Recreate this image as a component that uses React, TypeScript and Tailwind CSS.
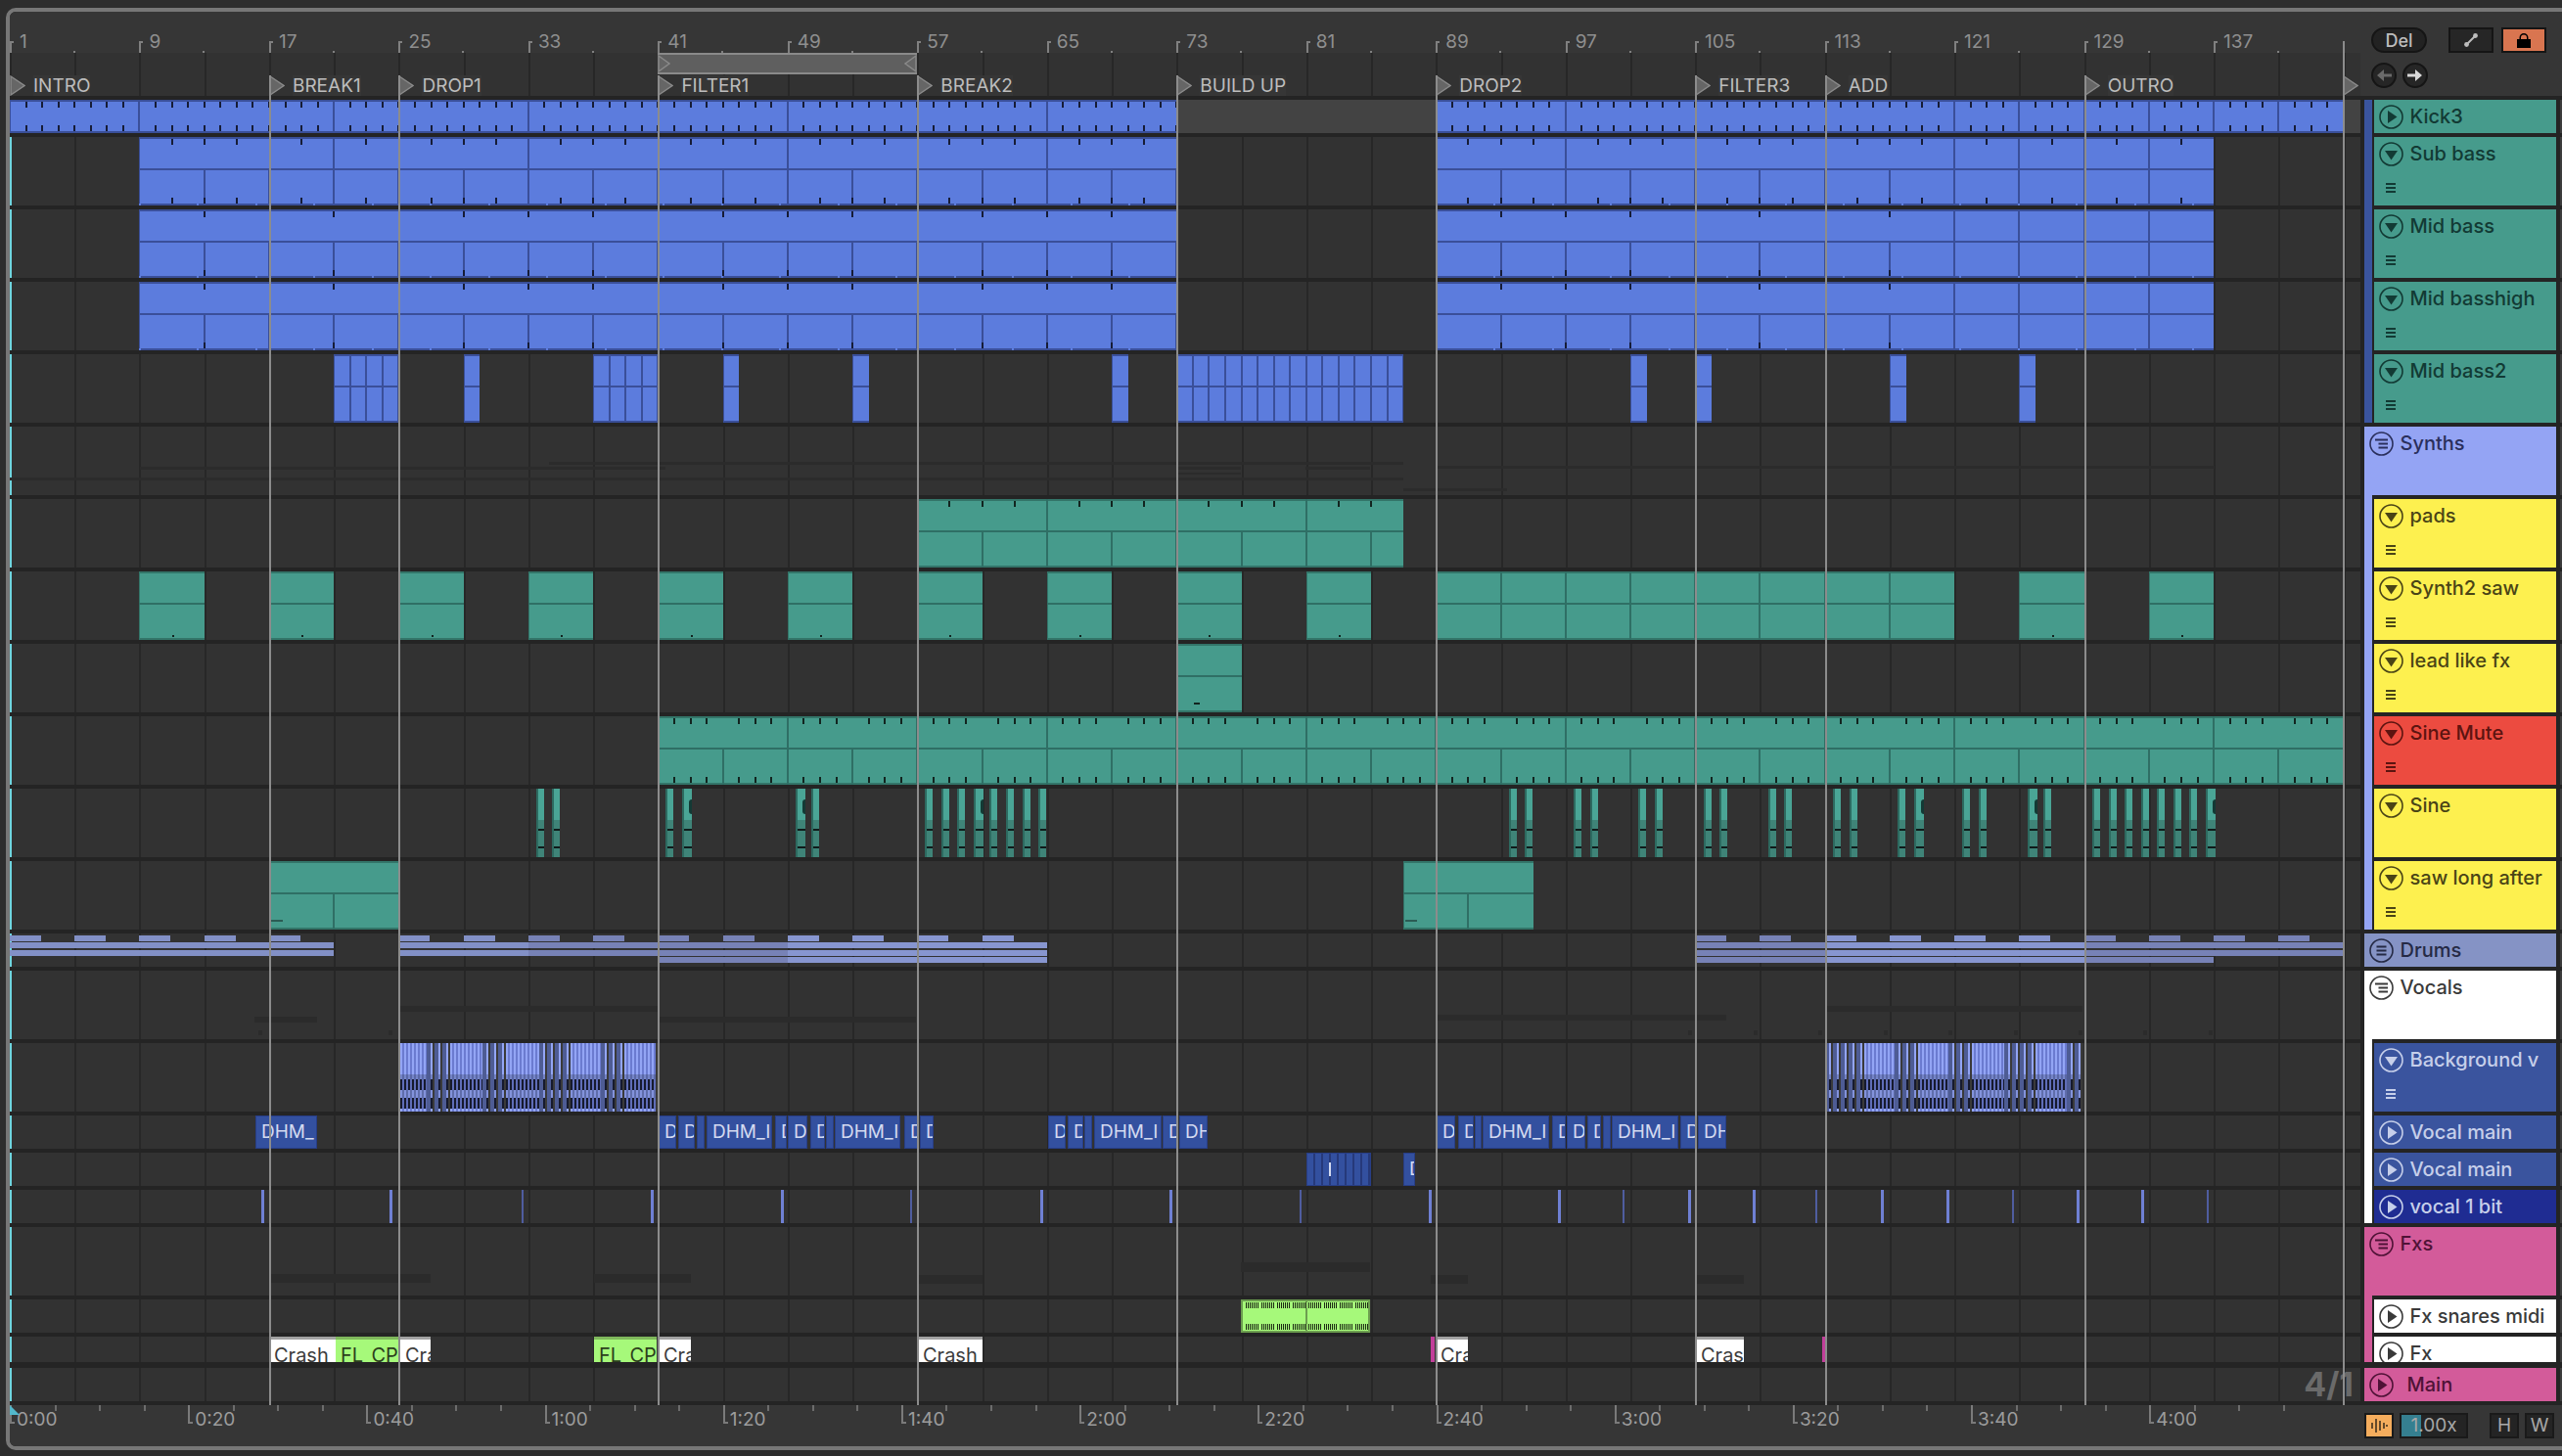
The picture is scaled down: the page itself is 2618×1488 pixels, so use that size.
import type { ReactNode } from 'react'

const BAR = 16.56
const bx = (b: number) => (b - 1) * BAR

const range = (a: number, b: number, step = 1) => {
  const out: number[] = []
  for (let i = a; i < b; i += step) out.push(i)
  return out
}

type Pal = { bg: string; band: string; split: string; tick: string }
const BLUE: Pal = { bg: 'bg-[#5c7cdd]', band: 'bg-[#3a4f99]', split: 'bg-[#3a4f99]', tick: 'bg-[#161c36]' }
const TEAL: Pal = { bg: 'bg-[#469b8c]', band: 'bg-[#337569]', split: 'bg-[#2f6f65]', tick: 'bg-[#12241f]' }

type ClipProps = {
  from: number
  to: number
  pal: Pal
  mid?: boolean
  splits?: number[]
  topSplits?: number[]
  botSplits?: number[]
  topTicks?: number[]
  botTicks?: number[]
  children?: ReactNode
}

function Clip({ from, to, pal, mid, splits = [], topSplits = [], botSplits = [], topTicks = [], botTicks = [], children }: ClipProps) {
  const inside = (b: number) => b >= from && b <= to
  return (
    <div className={`absolute inset-y-0 overflow-hidden ${pal.bg}`} style={{ left: bx(from), width: bx(to) - bx(from) }}>
      <div className={`absolute inset-x-0 top-0 h-[2px] ${pal.band}`} />
      <div className={`absolute inset-x-0 bottom-0 h-[2px] ${pal.band}`} />
      <div className={`absolute inset-y-0 left-0 w-[1px] ${pal.band}`} />
      {mid && <div className={`absolute inset-x-0 top-[32px] h-[2px] ${pal.split}`} />}
      {splits.filter(inside).map((b) => (
        <div key={b} className={`absolute inset-y-0 w-[2px] ${pal.split}`} style={{ left: bx(b) - bx(from) - 1 }} />
      ))}
      {topSplits.filter(inside).map((b) => (
        <div key={b} className={`absolute top-0 h-[32px] w-[2px] ${pal.split}`} style={{ left: bx(b) - bx(from) - 1 }} />
      ))}
      {botSplits.filter(inside).map((b) => (
        <div key={b} className={`absolute top-[34px] bottom-0 w-[2px] ${pal.split}`} style={{ left: bx(b) - bx(from) - 1 }} />
      ))}
      {topTicks.filter(inside).map((b) => (
        <div key={b} className={`absolute top-[2px] h-[6px] w-[2px] ${pal.tick}`} style={{ left: bx(b) - bx(from) - 1 }} />
      ))}
      {botTicks.filter(inside).map((b) => (
        <div key={b} className={`absolute bottom-[2px] h-[6px] w-[2px] ${pal.tick}`} style={{ left: bx(b) - bx(from) - 1 }} />
      ))}
      {children}
    </div>
  )
}

// thin marks given in page pixels, lane starts at x=10
function Px({ x, w, y, h, cls }: { x: number; w: number; y: number; h: number; cls: string }) {
  return <div className={`absolute ${cls}`} style={{ left: x - 10, width: w, top: y, height: h }} />
}

function Named({ x1, x2, label }: { x1: number; x2: number; label: string }) {
  return (
    <div
      className="absolute inset-y-0 overflow-hidden whitespace-nowrap border border-[#283e86] bg-[#33509f] pl-[5px] text-[19px] leading-[32px] text-[#d3daf0]"
      style={{ left: x1 - 10, width: x2 - x1 }}
    >
      {label}
    </div>
  )
}

function FxClip({ x1, x2, label, green }: { x1: number; x2: number; label: string; green?: boolean }) {
  return (
    <div
      className={`absolute inset-y-0 overflow-hidden whitespace-nowrap border-t-[3px] pl-[5px] text-[20px] leading-[32px] ${
        green ? 'border-[#7fb85c] bg-[#a6f97a] text-[#2c3f1c]' : 'border-[#a2a2a2] bg-white text-[#3c3c3c]'
      }`}
      style={{ left: x1 - 10, width: x2 - x1 }}
    >
      {label}
    </div>
  )
}

const KICK_SPLITS = [9, 21, 33, 49, 65, 97, 121, 125, 129, 133, 137, 141]
const LOCATORS = [17, 25, 41, 57, 73, 89, 105, 113, 129]
const END_BAR = 144.96

const kickTicks = range(2, 146).filter((b) => !KICK_SPLITS.includes(b) && !(b >= 121 && b % 4 === 1))
const subSkip = [9, 17, 21, 25, 33, 41, 49, 57, 65, 73, 89, 97, 105, 113, 121, 125, 129, 133]
const subTicks = range(9, 136, 2).filter((b) => !subSkip.includes(b))
const subBot = range(13, 137, 4)
const midTicks = range(13, 118, 4).filter((b) => ![17, 25, 41, 57, 73, 77, 81, 85, 89, 105, 113].includes(b))

function Bass({ ticks, tops }: { ticks: number[]; tops: number[] }) {
  const common = { pal: BLUE, mid: true, topSplits: tops, botSplits: subBot, topTicks: ticks, botTicks: ticks }
  const notches = (
    <div className="absolute inset-x-0 bottom-0 h-[2px] bg-[repeating-linear-gradient(90deg,#5c7cdd_0,#5c7cdd_2px,transparent_2px,transparent_59.5px)]" />
  )
  return (
    <>
      <Clip from={9} to={73} {...common}>{notches}</Clip>
      <Clip from={89} to={137} {...common}>{notches}</Clip>
    </>
  )
}

function Kick() {
  return (
    <>
      <Clip from={1} to={73} pal={BLUE} splits={KICK_SPLITS} topTicks={kickTicks} botTicks={kickTicks} />
      <div className="absolute inset-y-0 bg-[#434343]" style={{ left: bx(73), width: bx(89) - bx(73) }} />
      <Clip from={89} to={END_BAR} pal={BLUE} splits={KICK_SPLITS} topTicks={kickTicks} botTicks={kickTicks} />
      <div className="absolute inset-y-0 right-0 w-[17px] bg-[#434343]" />
    </>
  )
}

function Bass2() {
  const smalls = [29, 45, 53, 69, 101, 105, 117, 125]
  const blockSplits = range(22, 88)
  return (
    <>
      <Clip from={21} to={25} pal={BLUE} mid splits={blockSplits} />
      <Clip from={37} to={41} pal={BLUE} mid splits={blockSplits} />
      <Clip from={73} to={87} pal={BLUE} mid splits={blockSplits} />
      {smalls.map((b) => (
        <Clip key={b} from={b} to={b + 1} pal={BLUE} mid />
      ))}
    </>
  )
}

function Faint({ items }: { items: [number, number, number, number][] }) {
  return (
    <>
      {items.map(([x1, x2, y, h], i) => (
        <Px key={i} x={x1} w={x2 - x1} y={y} h={h} cls="bg-[#2b2b2b]" />
      ))}
    </>
  )
}

function Saw2() {
  const starts = [9, 17, 25, 33, 41, 49, 57, 65, 73, 81, 125, 133]
  return (
    <>
      {starts.map((b) => (
        <Clip key={b} from={b} to={b + 4} pal={TEAL} mid>
          <div className="absolute bottom-[3px] left-1/2 h-[2px] w-[2px] bg-[#12241f]" />
        </Clip>
      ))}
      <Clip from={89} to={121} pal={TEAL} mid splits={range(93, 121, 4)} />
    </>
  )
}

function SineBit({ bar, wide }: { bar: number; wide?: boolean }) {
  return (
    <div
      className={`absolute inset-y-0 flex flex-col overflow-hidden border-l-2 border-[#2d6a60] bg-[#4aa596] ${wide ? 'w-[10px]' : 'w-[8px]'}`}
      style={{ left: bx(bar) }}
    >
      {wide && <div className="absolute right-[-3px] top-[11px] h-[15px] w-[6px] rounded-full bg-[#133a35]" />}
      <div className="h-[32px]" />
      <div className="relative flex-1 bg-[#3f8478]">
        <div className="absolute inset-x-0 top-[9px] h-[2px] bg-[#0f1b1a]" />
        <div className="absolute inset-x-0 top-[27px] h-[2px] bg-[#0f1b1a]" />
      </div>
    </div>
  )
}

function Sine() {
  const bars = [
    33.47, 34.47, 41.47, 42.47, 49.47, 50.47,
    ...range(57.47, 65),
    93.5, 94.5, 97.5, 98.5, 101.5, 102.5, 105.5, 106.5, 109.5, 110.5, 113.5, 114.5, 117.5, 118.5, 121.5, 122.5, 125.5, 126.5,
    ...range(129.5, 137),
  ]
  const wide = [42.47, 49.47, 60.47, 118.5, 125.5, 136.5]
  return (
    <>
      {bars.map((b) => (
        <SineBit key={b} bar={b} wide={wide.includes(b)} />
      ))}
    </>
  )
}

const DRUM_SPANS: [number, number, string][] = [
  [1, 21, 'bg-[#8290c6]'],
  [25, 33, 'bg-[#8290c6]'],
  [33, 49, 'bg-[#7782b6]'],
  [49, 65, 'bg-[#8796d0]'],
  [105, 113, 'bg-[#7782b6]'],
  [113, 129, 'bg-[#8796d0]'],
  [129, END_BAR, 'bg-[#7782b6]'],
]

function Drums() {
  const dashes = [...range(1, 21, 4), ...range(25, 65, 4), ...range(105, 145, 4)]
  const third = DRUM_SPANS.filter(([a]) => a >= 33).map(([a, b, cls]): [number, number, string] => [Math.max(a, 41), Math.min(b, 137), cls])
  return (
    <>
      {dashes.map((b) => (
        <div
          key={b}
          className={`absolute top-[2px] h-[6px] w-[32px] ${DRUM_SPANS.find(([a, z]) => b >= a && b < z)?.[2]}`}
          style={{ left: bx(b) }}
        />
      ))}
      {DRUM_SPANS.map(([a, b, cls]) => (
        <div key={a} className={`absolute top-[9px] h-[6px] ${cls}`} style={{ left: bx(a), width: bx(b) - bx(a) }} />
      ))}
      {DRUM_SPANS.map(([a, b, cls]) => (
        <div key={a} className={`absolute top-[17px] h-[6px] ${cls}`} style={{ left: bx(a), width: bx(b) - bx(a) }} />
      ))}
      {third.map(([a, b, cls]) => (
        <div key={a} className={`absolute top-[24px] h-[6px] ${cls}`} style={{ left: bx(a), width: bx(b) - bx(a) }} />
      ))}
    </>
  )
}

function StripeBands() {
  return (
    <div className="flex h-full flex-col">
      <div className="h-[32px] bg-[repeating-linear-gradient(90deg,#93a5f5_0,#93a5f5_2px,#6b7bd0_2px,#6b7bd0_4px)]" />
      <div className="h-[5px] bg-[repeating-linear-gradient(90deg,#7484c8_0,#7484c8_2px,#5a68a6_2px,#5a68a6_4px)]" />
      <div className="h-[11px] bg-[repeating-linear-gradient(90deg,#161a2e_0,#161a2e_2px,#5f6db8_2px,#5f6db8_4px)]" />
      <div className="h-[8px] bg-[repeating-linear-gradient(90deg,#8393dc_0,#8393dc_2px,#5f6daa_2px,#5f6daa_4px)]" />
      <div className="h-[11px] bg-[repeating-linear-gradient(90deg,#161a2e_0,#161a2e_2px,#5f6db8_2px,#5f6db8_4px)]" />
      <div className="h-[3px] bg-[repeating-linear-gradient(90deg,#93a5f5_0,#93a5f5_2px,#6b7bd0_2px,#6b7bd0_4px)]" />
    </div>
  )
}

// 0 is a short slice (blue column, one stripe, gap), any other number a long run of that width
function Stutter({ x, units }: { x: number; units: number[] }) {
  return (
    <div className="absolute inset-y-0 flex w-[263px] overflow-hidden bg-[#3a3a3a]" style={{ left: x - 10 }}>
      {units.map((u, i) =>
        u === 0 ? (
          <div key={i} className="flex h-full w-[8px] shrink-0">
            <div className="w-[4px] bg-[#4e5c94]" />
            <div className="w-[2px]"><StripeBands /></div>
            <div className="w-[2px] bg-[#3a3a3a]" />
          </div>
        ) : (
          <div key={i} className="h-full shrink-0" style={{ width: u }}><StripeBands /></div>
        ),
      )}
    </div>
  )
}

const STUTTER_A = [27, 0, 0, 0, 33, 0, 0, 0, 34, 0, 0, 0, 0, 31, 0, 0, 0, 32]
const STUTTER_B = [0, 0, 0, 0, 0, 31, 0, 0, 0, 31, 0, 0, 0, 33, 0, 0, 0, 0, 32, 0, 0]

const DHM: [number, number, string][] = [
  [261, 324, 'DHM_'],
  [673, 691, 'D'], [693, 710, 'D'], [712, 720, 'I'], [722, 789, 'DHM_I'], [792, 804, 'D'], [805, 825, 'D'], [828, 843, 'D'], [844, 852, 'I'], [853, 920, 'DHM_I'], [924, 938, 'D'], [940, 954, 'D'],
  [1071, 1089, 'D'], [1091, 1107, 'D'], [1108, 1116, 'I'], [1118, 1187, 'DHM_I'], [1188, 1204, 'D'], [1205, 1234, 'DH'],
  [1468, 1487, 'D'], [1490, 1506, 'D'], [1507, 1514, 'I'], [1515, 1583, 'DHM_I'], [1586, 1600, 'D'], [1601, 1620, 'D'], [1622, 1636, 'D'], [1638, 1646, 'I'], [1647, 1715, 'DHM_I'], [1717, 1734, 'D'], [1735, 1764, 'DH'],
]

const ONE_BIT = [267, 398, 533, 665, 798, 930, 1063, 1195, 1328, 1460, 1592, 1658, 1725, 1791, 1855, 1922, 1989, 2056, 2122, 2188, 2255]

function FxSnares() {
  const ticks = range(0, 64).filter((i) => i % 8 !== 7)
  return (
    <div className="absolute inset-y-0 border-2 border-[#6c9e4f] bg-[#a6f97a]" style={{ left: 1258, width: 132 }}>
      <div className="absolute inset-y-0 left-[64px] w-[2px] bg-[#6c9e4f]" />
      {ticks.map((i) => (
        <div key={i}>
          <div className="absolute top-[1px] h-[6px] w-[1px] bg-[#1e2a15]" style={{ left: 3 + i * 2 }} />
          <div className="absolute bottom-[1px] h-[6px] w-[1px] bg-[#1e2a15]" style={{ left: 3 + i * 2 }} />
        </div>
      ))}
    </div>
  )
}

type IconKind = 'play' | 'down' | 'group' | 'groupEq'

function TrackIcon({ kind }: { kind: IconKind }) {
  return (
    <svg width="25" height="25" viewBox="0 0 25 25" className="shrink-0" fill="currentColor">
      <circle cx="12.5" cy="12.5" r="11.5" fill="none" stroke="currentColor" strokeWidth="1.6" />
      {kind === 'play' && <polygon points="9,6 9,19 18.5,12.5" />}
      {kind === 'down' && <polygon points="6,9 19,9 12.5,18.5" />}
      {kind === 'group' && <path d="M6 8.5h13M9.5 12.5h9.5M9.5 16.5h9.5" stroke="currentColor" strokeWidth="1.8" fill="none" />}
      {kind === 'groupEq' && <path d="M7.5 8.5h10M7.5 12.5h10M7.5 16.5h10" stroke="currentColor" strokeWidth="1.8" fill="none" />}
    </svg>
  )
}

type Row = {
  name: string
  h: string
  bg: string
  text: string
  icon: IconKind
  stripe?: string
  below?: string
  lines?: boolean
  gap?: string
  textGap?: string
  lane?: ReactNode
}

const BASS_STRIPE = 'bg-[#3a549e]'
const SYN_STRIPE = 'bg-[#94a4f4]'
const TEAL_H = { bg: 'bg-[#469b8c]', text: 'text-[#123a34]' }
const YEL_H = { bg: 'bg-[#fdf04f]', text: 'text-[#4a4416]' }
const VOC_H = { bg: 'bg-[#3a549e]', text: 'text-[#c6cfea]' }

const baseTops = [21, 33, 49, 65, 97, 121, 125, 129, 133]
const midTops = [121, 125, 129, 133]

const ROWS: Row[] = [
  { name: 'Kick3', h: 'h-[34px]', ...TEAL_H, icon: 'play', stripe: BASS_STRIPE, below: BASS_STRIPE, lane: <Kick /> },
  { name: 'Sub bass', h: 'h-[70px]', ...TEAL_H, icon: 'down', lines: true, stripe: BASS_STRIPE, below: BASS_STRIPE, lane: <Bass ticks={subTicks} tops={baseTops} /> },
  { name: 'Mid bass', h: 'h-[70px]', ...TEAL_H, icon: 'down', lines: true, stripe: BASS_STRIPE, below: BASS_STRIPE, lane: <Bass ticks={midTicks} tops={midTops} /> },
  { name: 'Mid basshigh', h: 'h-[70px]', ...TEAL_H, icon: 'down', lines: true, stripe: BASS_STRIPE, below: BASS_STRIPE, lane: <Bass ticks={midTicks} tops={midTops} /> },
  { name: 'Mid bass2', h: 'h-[70px]', ...TEAL_H, icon: 'down', lines: true, stripe: BASS_STRIPE, lane: <Bass2 /> },
  {
    name: 'Synths', h: 'h-[70px]', bg: SYN_STRIPE, text: 'text-[#2a2f5c]', icon: 'group', below: SYN_STRIPE,
    lane: <Faint items={[[561, 1434, 36, 3], [143, 680, 41, 3], [1204, 1268, 41, 3], [1334, 1400, 41, 3], [1204, 1268, 47, 2], [10, 1434, 52, 3], [1434, 1540, 63, 3], [1468, 2263, 40, 3]]} />,
  },
  { name: 'pads', h: 'h-[70px]', ...YEL_H, icon: 'down', lines: true, stripe: SYN_STRIPE, below: SYN_STRIPE, lane: <Clip from={57} to={87} pal={TEAL} mid topSplits={[65, 73, 81]} botSplits={range(61, 87, 4)} topTicks={[59, 61, 63, 67, 69, 71, 75, 77, 79, 83, 85]} /> },
  { name: 'Synth2 saw', h: 'h-[70px]', ...YEL_H, icon: 'down', lines: true, stripe: SYN_STRIPE, below: SYN_STRIPE, lane: <Saw2 /> },
  {
    name: 'lead like fx', h: 'h-[70px]', ...YEL_H, icon: 'down', lines: true, stripe: SYN_STRIPE, below: SYN_STRIPE,
    lane: <Clip from={73} to={77} pal={TEAL} mid><div className="absolute bottom-[8px] left-[18px] h-[2px] w-[6px] bg-[#12241f]" /></Clip>,
  },
  {
    name: 'Sine Mute', h: 'h-[70px]', bg: 'bg-[#ec4b40]', text: 'text-[#5c1410]', icon: 'down', lines: true, stripe: SYN_STRIPE, below: SYN_STRIPE,
    lane: <Clip from={41} to={END_BAR} pal={TEAL} mid topSplits={range(49, 145, 8)} botSplits={range(45, 145, 4)} topTicks={range(42, 145).filter((b) => b % 4 !== 1)} botTicks={range(42, 145).filter((b) => b % 4 !== 1)} />,
  },
  { name: 'Sine', h: 'h-[70px]', ...YEL_H, icon: 'down', stripe: SYN_STRIPE, below: SYN_STRIPE, lane: <Sine /> },
  {
    name: 'saw long after', h: 'h-[70px]', ...YEL_H, icon: 'down', lines: true, stripe: SYN_STRIPE,
    lane: (
      <>
        <Clip from={17} to={25} pal={TEAL} mid botSplits={[21]}><div className="absolute bottom-[8px] left-[2px] h-[2px] w-[12px] bg-[#2a5c54]" /></Clip>
        <Clip from={87} to={95} pal={TEAL} mid botSplits={[91]}><div className="absolute bottom-[8px] left-[2px] h-[2px] w-[12px] bg-[#2a5c54]" /></Clip>
      </>
    ),
  },
  { name: 'Drums', h: 'h-[34px]', bg: 'bg-[#8593c5]', text: 'text-[#252a45]', icon: 'groupEq', lane: <Drums /> },
  {
    name: 'Vocals', h: 'h-[70px]', bg: 'bg-white', text: 'text-[#3a3a3a]', icon: 'group', below: 'bg-white',
    lane: <Faint items={[[260, 324, 47, 6], [409, 673, 36, 6], [673, 936, 47, 6], [1865, 2128, 36, 6], [1468, 1764, 45, 6], [264, 268, 61, 5], [397, 401, 61, 5], [1725, 1729, 61, 5], [1792, 1796, 61, 5], [1858, 1862, 61, 5], [1925, 1929, 61, 5], [1991, 1995, 61, 5], [2058, 2062, 61, 5], [2124, 2128, 61, 5], [2190, 2194, 61, 5], [2257, 2261, 61, 5]]} />,
  },
  {
    name: 'Background v', h: 'h-[70px]', ...VOC_H, icon: 'down', lines: true, stripe: 'bg-white', below: 'bg-white',
    lane: <><Stutter x={409} units={STUTTER_A} /><Stutter x={1865} units={STUTTER_B} /></>,
  },
  {
    name: 'Vocal main', h: 'h-[34px]', ...VOC_H, icon: 'play', stripe: 'bg-white', below: 'bg-white',
    lane: DHM.map(([a, b, t]) => <Named key={a} x1={a} x2={b} label={t} />),
  },
  {
    name: 'Vocal main', h: 'h-[34px]', ...VOC_H, icon: 'play', stripe: 'bg-white', below: 'bg-white',
    lane: (
      <>
        <div className="absolute inset-y-0 border border-[#283e86] bg-[repeating-linear-gradient(90deg,#33509f_0,#33509f_6px,#26397a_6px,#26397a_8px)]" style={{ left: 1325, width: 66 }}>
          <div className="absolute left-[22px] top-[9px] h-[14px] w-[2px] bg-[#d3daf0]" />
        </div>
        <Named x1={1434} x2={1446} label="D" />
      </>
    ),
  },
  {
    name: 'vocal 1 bit', h: 'h-[34px]', bg: 'bg-[#1f2c92]', text: 'text-[#c6cfea]', icon: 'play', stripe: 'bg-white',
    lane: ONE_BIT.map((x, i) => <Px key={x} x={x} w={i % 3 === 2 ? 2 : 3} y={0} h={34} cls={i % 3 === 2 ? 'bg-[#4f5d9f]' : 'bg-[#6f80d4]'} />),
  },
  {
    name: 'Fxs', h: 'h-[70px]', bg: 'bg-[#d35b9a]', text: 'text-[#4f1236]', icon: 'group', below: 'bg-[#d35b9a]',
    lane: <Faint items={[[275, 440, 48, 9], [607, 706, 48, 9], [938, 1004, 49, 9], [1268, 1400, 36, 10], [1462, 1500, 49, 9], [1733, 1782, 49, 9]]} />,
  },
  {
    name: 'Fx snares midi', h: 'h-[34px]', bg: 'bg-white', text: 'text-[#3a3a3a]', icon: 'play', stripe: 'bg-[#d35b9a]', below: 'bg-[#d35b9a]',
    lane: <FxSnares />,
  },
  {
    name: 'Fx', h: 'h-[26px]', bg: 'bg-white', text: 'text-[#3a3a3a]', icon: 'play', stripe: 'bg-[#d35b9a]', gap: 'h-[6px]',
    lane: (
      <>
        <FxClip x1={275} x2={343} label="Crash" />
        <FxClip x1={343} x2={407} label="FL_CP" green />
        <Px x={407} w={2} y={0} h={26} cls="bg-[#a8308a]" />
        <FxClip x1={409} x2={440} label="Crash" />
        <FxClip x1={607} x2={671} label="FL_CP" green />
        <FxClip x1={673} x2={706} label="Crash" />
        <FxClip x1={938} x2={1004} label="Crash" />
        <Px x={1462} w={4} y={0} h={26} cls="bg-[#c23f9a]" />
        <FxClip x1={1467} x2={1500} label="Crash" />
        <FxClip x1={1733} x2={1782} label="Crash" />
        <Px x={1862} w={4} y={0} h={26} cls="bg-[#c23f9a]" />
      </>
    ),
  },
  {
    name: 'Main', h: 'h-[34px]', bg: 'bg-[#d35b9a]', text: 'text-[#4f1236]', icon: 'play', textGap: 'ml-[14px]',
    lane: <div className="absolute right-[7px] top-[-2px] text-[34px] font-bold leading-[38px] text-[#6a6a6a]">4/1</div>,
  },
]

function TrackRow({ row }: { row: Row }) {
  return (
    <div className="flex">
      <div className="flex w-[2402px] flex-col">
        <div className={`relative bg-[#323232] bg-[repeating-linear-gradient(90deg,#272727_0,#272727_2px,transparent_2px,transparent_66.24px)] ${row.h}`}>
          <div className="absolute inset-y-0 left-0 w-[2px] bg-[#6fd5df]" />
          {row.lane}
        </div>
        <div className={row.gap ?? 'h-[4px]'} />
      </div>
      <div className="ml-[4px] w-[196px]">
        <div className={`flex ${row.h}`}>
          {row.stripe && <div className={`w-[8px] ${row.stripe}`} />}
          {row.stripe && <div className="w-[2px]" />}
          <div className={`flex flex-1 flex-col overflow-hidden ${row.bg} ${row.text}`}>
            <div className="flex items-center pl-[4.5px] pt-[4.5px]">
              <TrackIcon kind={row.icon} />
              <span className={`whitespace-nowrap text-[20px] font-medium leading-[25px] ${row.textGap ?? 'ml-[7px]'}`}>{row.name}</span>
            </div>
            {row.lines && (
              <svg width="10" height="10" viewBox="0 0 10 10" className="mb-[13px] ml-[12px] mt-auto" fill="currentColor">
                <rect y="0" width="10" height="2" />
                <rect y="4" width="10" height="2" />
                <rect y="8" width="10" height="2" />
              </svg>
            )}
          </div>
        </div>
        <div className={row.gap ?? 'h-[4px]'}>
          {row.below && <div className={`h-full w-[8px] ${row.below}`} />}
        </div>
      </div>
      <div className={`ml-[4px] w-[2px] bg-[#3c3c3c] ${row.h}`} />
    </div>
  )
}

function Locator({ bar, label }: { bar: number; label?: string }) {
  return (
    <div className="absolute bottom-0 flex h-[21px] items-center" style={{ left: bx(bar) }}>
      <svg width="16" height="21" viewBox="0 0 16 21" className="shrink-0">
        <polygon points="1,1 15,10.5 1,20" fill="#666666" stroke="#8a8a8a" strokeWidth="1.4" />
      </svg>
      {label && <span className="ml-[8px] bg-[#363636] text-[19px] leading-[21px] text-[#bdbdbd]">{label}</span>}
    </div>
  )
}

function BarRuler() {
  return (
    <div className="flex h-[42px] overflow-hidden bg-[#363636]">
      {range(1, 138, 8).map((b) => (
        <div key={b} className="relative w-[132.48px] shrink-0 pl-[10px] pt-[20px] text-[19px] leading-[22px] text-[#8f8f8f]">
          <div className="absolute left-0 top-[30px] h-[12px] w-[2px] bg-[#808080]" />
          <div className="absolute left-0 top-[30px] h-[2px] w-[4px] bg-[#808080]" />
          <div className="absolute left-[65px] top-[40px] h-[2px] w-[2px] bg-[#808080]" />
          {b}
        </div>
      ))}
    </div>
  )
}

function TimeRuler() {
  const labels = ['0:00', '0:20', '0:40', '1:00', '1:20', '1:40', '2:00', '2:20', '2:40', '3:00', '3:20', '3:40', '4:00']
  return (
    <div className="relative flex h-[42px] w-[2402px] overflow-hidden bg-[#363636]">
      <div className="absolute left-0 top-0 z-10 h-0 w-0 border-b-[10px] border-r-[10px] border-b-[#52b8cc] border-r-transparent" />
      {labels.map((t) => (
        <div key={t} className="relative w-[182.2px] shrink-0 pl-[7px] pt-[3px] text-[19px] leading-[24px] text-[#9c9c9c]">
          <div className="absolute left-0 top-0 h-[19px] w-[2px] bg-[#7a7a7a]" />
          <div className="absolute left-0 top-[17px] h-[2px] w-[5px] bg-[#7a7a7a]" />
          <div className="absolute left-[45.5px] top-0 h-[6px] w-[2px] bg-[#6c6c6c]" />
          <div className="absolute left-[91px] top-0 h-[6px] w-[2px] bg-[#6c6c6c]" />
          <div className="absolute left-[136.6px] top-0 h-[6px] w-[2px] bg-[#6c6c6c]" />
          {t}
        </div>
      ))}
    </div>
  )
}

function RoundArrow({ dir, dim }: { dir: 'left' | 'right'; dim?: boolean }) {
  return (
    <div className="flex h-[26px] w-[26px] items-center justify-center rounded-full border-2 border-[#151515] bg-[#262626]">
      <svg width="16" height="14" viewBox="0 0 16 14" fill={dim ? '#6a6a6a' : '#d8d8d8'}>
        {dir === 'right' ? <path d="M0 5.4h8V1l7 6-7 6V8.6H0z" /> : <path d="M16 5.4H8V1L1 7l7 6V8.6h8z" />}
      </svg>
    </div>
  )
}

function TopControls() {
  return (
    <div className="flex h-[86px] w-[206px] flex-col bg-[#363636] pl-[11px] pt-[16px]">
      <div className="flex items-center">
        <div className="flex h-[26px] w-[57px] items-center justify-center rounded-full border-2 border-[#151515] bg-[#222222] text-[18px] font-medium text-[#bdbdbd]">Del</div>
        <div className="ml-[22px] flex h-[26px] w-[46px] items-center justify-center border-2 border-[#151515] bg-[#262626]">
          <svg width="16" height="16" viewBox="0 0 16 16" stroke="#bdbdbd" fill="#bdbdbd" strokeWidth="2">
            <line x1="3" y1="13" x2="13" y2="3" />
            <circle cx="3.5" cy="12.5" r="2.4" stroke="none" />
            <circle cx="12.5" cy="3.5" r="2.4" stroke="none" />
          </svg>
        </div>
        <div className="ml-[8px] flex h-[26px] w-[46px] items-center justify-center border-2 border-[#151515] bg-[#d97550]">
          <svg width="16" height="15" viewBox="0 0 16 15" fill="#000000">
            <path d="M3.5 6V4.5a4.5 4.5 0 0 1 9 0V6H11V4.5a3 3 0 0 0-6 0V6z" />
            <rect x="1" y="6" width="14" height="9" />
          </svg>
        </div>
      </div>
      <div className="mt-[10px] flex gap-[6px]">
        <RoundArrow dir="left" dim />
        <RoundArrow dir="right" />
      </div>
    </div>
  )
}

function BottomControls() {
  return (
    <div className="flex h-[42px] w-[206px] items-start bg-[#363636] pl-[4px] pt-[8px]">
      <div className="flex h-[26px] w-[30px] items-center justify-center border-2 border-[#1a1a1a] bg-[#f5ad5d]">
        <svg width="18" height="16" viewBox="0 0 18 16" stroke="#2a2118" strokeWidth="1.4">
          <path d="M2 5v6M6 1v14M10 3v10M14 5v6M17 7v2" />
        </svg>
      </div>
      <div className="relative ml-[6px] h-[26px] w-[70px] border-2 border-[#1a1a1a] bg-[#242424] text-center text-[19px] leading-[22px] text-[#a8a8a8]">
        <div className="absolute inset-y-0 left-0 w-[20px] bg-[#357f90]" />
        <span className="relative">1.00x</span>
      </div>
      <div className="ml-[22px] h-[26px] w-[30px] border-2 border-[#1a1a1a] bg-[#242424] text-center text-[19px] leading-[22px] text-[#a8a8a8]">H</div>
      <div className="ml-[6px] h-[26px] w-[30px] border-2 border-[#1a1a1a] bg-[#242424] text-center text-[19px] leading-[22px] text-[#a8a8a8]">W</div>
    </div>
  )
}

export default function App() {
  return (
    <div className="h-[1488px] w-[2618px] overflow-hidden bg-[#2d2d2d] pl-[6px] pt-[8px] font-[Inter,sans-serif]">
      <div className="relative flex h-[1474px] flex-col overflow-hidden rounded-l-[10px] border-y-4 border-l-4 border-[#777777] bg-[#242424]">
        <div className="flex h-[90px]">
          <div className="w-[2402px]">
            <BarRuler />
            <div className="relative h-[44px] bg-[#323232] bg-[repeating-linear-gradient(90deg,#272727_0,#272727_2px,transparent_2px,transparent_66.24px)]">
              <div className="absolute top-0 h-[22px] border-y-2 border-[#8a8a8a] bg-[#5f5f5f]" style={{ left: bx(41), width: bx(57) - bx(41) }}>
                <svg width="14" height="18" viewBox="0 0 14 18" className="absolute left-0 top-0">
                  <polygon points="1,1 12,9 1,17" fill="#666666" stroke="#8a8a8a" strokeWidth="1.4" />
                </svg>
                <svg width="14" height="18" viewBox="0 0 14 18" className="absolute right-0 top-0">
                  <polygon points="13,1 2,9 13,17" fill="#666666" stroke="#8a8a8a" strokeWidth="1.4" />
                </svg>
              </div>
              <Locator bar={1} label="INTRO" />
              <Locator bar={17} label="BREAK1" />
              <Locator bar={25} label="DROP1" />
              <Locator bar={41} label="FILTER1" />
              <Locator bar={57} label="BREAK2" />
              <Locator bar={73} label="BUILD UP" />
              <Locator bar={89} label="DROP2" />
              <Locator bar={105} label="FILTER3" />
              <Locator bar={113} label="ADD" />
              <Locator bar={129} label="OUTRO" />
              <Locator bar={END_BAR} />
            </div>
            <div className="h-[4px]" />
          </div>
          <TopControls />
        </div>
        {ROWS.map((row, i) => (
          <TrackRow key={i} row={row} />
        ))}
        <div className="flex">
          <TimeRuler />
          <BottomControls />
        </div>
        {LOCATORS.map((b) => (
          <div key={b} className="absolute bottom-[42px] top-[65px] w-[2px] bg-[#8c8c8c]" style={{ left: bx(b) }} />
        ))}
        <div className="absolute bottom-[42px] top-[30px] w-[2px] bg-[#8c8c8c]" style={{ left: bx(END_BAR) }} />
      </div>
    </div>
  )
}
